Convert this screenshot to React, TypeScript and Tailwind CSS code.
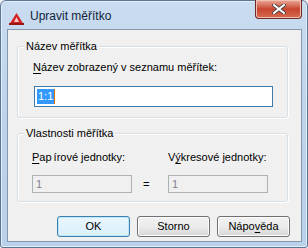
import React from "react";

const font = { fontFamily: '"Liberation Sans", Arial, sans-serif' };

function Btn({ children, focused }: { children: React.ReactNode; focused?: boolean }) {
  return (
    <div
      className={
        "w-[73px] h-[21px] rounded-[3px] flex items-center justify-center text-[11px] text-black " +
        (focused
          ? "border border-[#3c7fb1] bg-gradient-to-b from-[#eaf6fd] to-[#d9f0fc] shadow-[inset_0_0_0_1px_#bfe6fa]"
          : "border border-[#707070] bg-gradient-to-b from-[#f2f2f2] via-[#ebebeb] to-[#d6d6d6] shadow-[inset_0_0_0_1px_#fcfcfc]")
      }
    >
      {children}
    </div>
  );
}

export default function App() {
  return (
    <div className="w-[308px] h-[248px] overflow-hidden bg-[#f0f0f0]" style={font}>
      <div className="w-[308px] h-[248px] rounded-t-[6px] rounded-b-[3px] border border-[#5a7796] bg-gradient-to-b from-[#c9dcf0] via-[#bdd3ea] to-[#b9d1ea] flex flex-col pl-[6px] pr-[5px] pb-[5px] shadow-[inset_0_0_0_1px_#e4eef9]">
        <div className="h-[28px] flex items-start justify-between">
          <div className="flex items-start pt-[8px] pl-[2px]">
            <svg width="15" height="12" viewBox="0 0 15 12" className="mt-[4px]">
              <path d="M7.5 0 L15 12 L0 12 Z" fill="#d42020" />
              <path d="M7.5 4 L10 9 L5 9 Z" fill="#f6c9c9" />
              <rect x="0" y="10" width="15" height="2" fill="#9b1414" />
            </svg>
            <span className="ml-[6px] text-[12px] text-[#10233b] leading-[14px]">Upravit měřítko</span>
          </div>
          <div className="w-[47px] h-[19px] -mt-[1px] rounded-b-[4px] border border-[#6b2a24] border-t-0 bg-gradient-to-b from-[#e9a99b] via-[#c7452f] to-[#d66a4f] flex items-center justify-center shadow-[inset_0_0_0_1px_#f0c0b4]">
            <svg width="14" height="10" viewBox="0 0 14 10">
              <path d="M2 1 L12 9 M12 1 L2 9" stroke="#3a3a3a" strokeWidth="3.6" strokeLinecap="square" />
              <path d="M2 1 L12 9 M12 1 L2 9" stroke="#ffffff" strokeWidth="2" strokeLinecap="square" />
            </svg>
          </div>
        </div>
        <div className="flex-1 border border-[#8497ac] bg-[#f0f0f0] flex flex-col pl-[9px] pr-[13px] pt-[16px] text-[11px] text-black">
          {/* group 1 */}
          <div className="relative h-[72px] shrink-0 border border-[#d5dfe5] rounded-[3px] shadow-[inset_1px_1px_0_#ffffff,1px_1px_0_#ffffff] pl-[15px] pr-[14px]">
            <span className="absolute -top-[9px] left-[6px] px-[2px] bg-[#f0f0f0] leading-[16px]">Název měřítka</span>
            <div className="mt-[12px] leading-[16px]">
              <span className="underline underline-offset-2">N</span>ázev zobrazený v seznamu měřítek:
            </div>
            <div className="mt-[11px] ml-[1px] h-[21px] border border-[#3d7bad] bg-white flex items-center pl-[2px]">
              <span className="bg-[#3399ff] text-white leading-[15px] px-[1px]">1:1</span>
              <span className="w-[1px] h-[15px] bg-[#e07000]" />
            </div>
          </div>
          {/* group 2 */}
          <div className="relative mt-[15px] h-[69px] shrink-0 border border-[#d5dfe5] rounded-[3px] shadow-[inset_1px_1px_0_#ffffff,1px_1px_0_#ffffff] pl-[14px]">
            <span className="absolute -top-[9px] left-[6px] px-[2px] bg-[#f0f0f0] leading-[16px]">Vlastnosti měřítka</span>
            <div className="mt-[15px] flex leading-[16px]">
              <div className="w-[136px]">
                <span className="underline underline-offset-2">P</span>ap<span className="ml-[2px]">írové jednotky:</span>
              </div>
              <div>
                V<span className="underline underline-offset-2">ý</span>kresové jednotky:
              </div>
            </div>
            <div className="mt-[10px] flex items-center">
              <div className="w-[100px] h-[18px] border border-[#adb2b5] bg-[#f0f0f0] text-[#80808f] pl-[3px] leading-[16px]">1</div>
              <div className="w-[36px] pl-[11px]">=</div>
              <div className="w-[100px] h-[18px] border border-[#adb2b5] bg-[#f0f0f0] text-[#80808f] pl-[3px] leading-[16px]">1</div>
            </div>
          </div>
          <div className="mt-[14px] -mr-[2px] flex justify-end gap-[7px]">
            <Btn focused>OK</Btn>
            <Btn>Storno</Btn>
            <Btn>
              <span>
                Nápo<span className="underline underline-offset-2">v</span>ěda
              </span>
            </Btn>
          </div>
        </div>
      </div>
    </div>
  );
}
